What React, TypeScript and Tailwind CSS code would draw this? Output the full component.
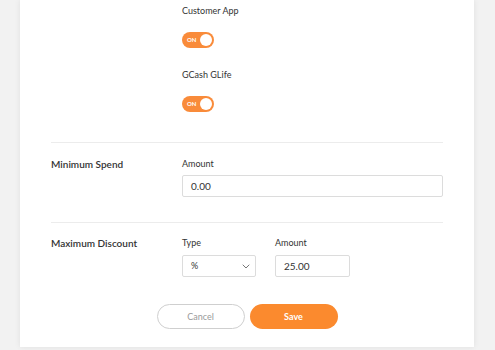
import React from 'react';

function Toggle() {
  return (
    <div className="relative flex h-[16px] w-[32px] items-center rounded-full bg-[#f98b3a]">
      <span className="pl-[5px] text-[6px] font-bold leading-none text-white">ON</span>
      <span className="absolute right-[2px] top-[2px] h-[12px] w-[12px] rounded-full bg-white" />
    </div>
  );
}

export default function App() {
  return (
    <div className="flex h-[350px] w-[495px] bg-[#f2f2f2] px-[20px] font-['Lato',sans-serif] text-[#333]">
      <div className="flex h-[347px] w-[454px] flex-col bg-white px-[31px] shadow-[0_0_6px_rgba(0,0,0,0.08)]">
        {/* Channels */}
        <div className="flex flex-col pl-[131px] pt-[5px]">
          <span className="text-[9px] leading-[12px]">Customer App</span>
          <div className="mt-[15px]">
            <Toggle />
          </div>
          <span className="mt-[21px] text-[9px] leading-[12px]">GCash GLife</span>
          <div className="mt-[15px]">
            <Toggle />
          </div>
        </div>

        <div className="mt-[30px] h-px bg-[#ececec]" />

        {/* Minimum Spend */}
        <div className="mt-[15px] flex">
          <span className="w-[131px] text-[10px] font-semibold leading-[12px]">Minimum Spend</span>
          <div className="flex flex-1 flex-col">
            <span className="text-[9px] leading-[12px]">Amount</span>
            <div className="mt-[5px] flex h-[22px] items-center rounded-[2px] border border-[#dcdcdc] px-[8px] text-[10px]">
              0.00
            </div>
          </div>
        </div>

        <div className="mt-[25px] h-px bg-[#ececec]" />

        {/* Maximum Discount */}
        <div className="mt-[14px] flex">
          <span className="w-[131px] text-[10px] font-semibold leading-[12px]">Maximum Discount</span>
          <div className="flex gap-[19px]">
            <div className="flex flex-col">
              <span className="text-[9px] leading-[12px]">Type</span>
              <div className="mt-[6px] flex h-[22px] w-[74px] items-center justify-between rounded-[2px] border border-[#dcdcdc] pl-[8px] pr-[5px] text-[9px]">
                <span>%</span>
                <svg width="8" height="5" viewBox="0 0 8 5" fill="none">
                  <path d="M1 1l3 3 3-3" stroke="#777" strokeWidth="1" strokeLinecap="round" strokeLinejoin="round" />
                </svg>
              </div>
            </div>
            <div className="flex flex-col">
              <span className="text-[9px] leading-[12px]">Amount</span>
              <div className="mt-[6px] flex h-[22px] w-[75px] items-center rounded-[2px] border border-[#dcdcdc] px-[8px] text-[10px]">
                25.00
              </div>
            </div>
          </div>
        </div>

        {/* Actions */}
        <div className="mt-[27px] flex justify-center gap-[5px]">
          <button className="h-[25px] w-[88px] rounded-full border border-[#cfcfcf] bg-white text-[9px] text-[#9a9a9a]">
            Cancel
          </button>
          <button className="h-[25px] w-[88px] rounded-full bg-[#fb8a2e] text-[9px] font-bold text-white">
            Save
          </button>
        </div>
      </div>
    </div>
  );
}
